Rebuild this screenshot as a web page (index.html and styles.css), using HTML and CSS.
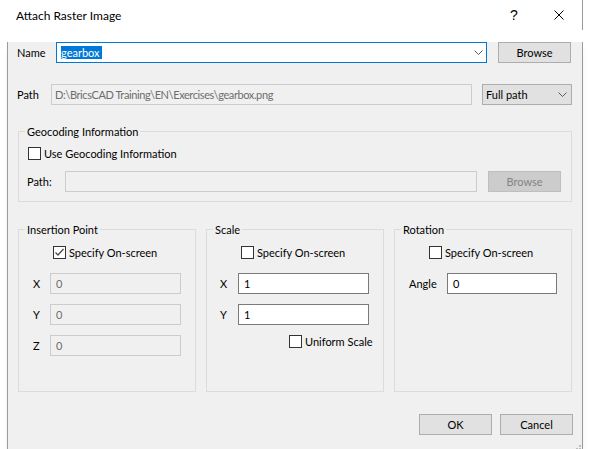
FILE: index.html
```html
<!DOCTYPE html>
<html>
<head>
<meta charset="utf-8">
<link rel="stylesheet" href="styles.css">
</head>
<body>
<div class="window">
  <div class="titlebar">
    <span class="title">Attach Raster Image</span>
    <span class="tb-btn help">?</span>
    <span class="tb-btn close"><svg width="10" height="10" viewBox="0 0 10 10"><path d="M0.5 0.5 L9.5 9.5 M9.5 0.5 L0.5 9.5" stroke="#000" stroke-width="1" fill="none"/></svg></span>
  </div>
  <div class="client">
    <div class="row row-name">
      <span class="lbl lbl-name">Name</span>
      <div class="combo combo-name"><span class="sel">gearbox</span><svg class="chev" width="9" height="5" viewBox="0 0 9 5"><path d="M0.5 0.5 L4.5 4.5 L8.5 0.5" stroke="#5a5a5a" stroke-width="1" fill="none"/></svg></div>
      <button class="btn btn-name">Browse</button>
    </div>
    <div class="row row-path">
      <span class="lbl lbl-path">Path</span>
      <div class="edit disabled edit-path">D:\BricsCAD Training\EN\Exercises\gearbox.png</div>
      <div class="combo combo-type"><span>Full path</span><svg class="chev" width="9" height="5" viewBox="0 0 9 5"><path d="M0.5 0.5 L4.5 4.5 L8.5 0.5" stroke="#5a5a5a" stroke-width="1" fill="none"/></svg></div>
    </div>
    <div class="group geo">
      <span class="legend">Geocoding Information</span>
      <div class="check-row geo-check"><span class="cb"></span><span>Use Geocoding Information</span></div>
      <div class="row geo-path">
        <span class="lbl lbl-geo">Path:</span>
        <div class="edit disabled edit-geo"></div>
        <button class="btn btn-disabled btn-geo">Browse</button>
      </div>
    </div>
    <div class="groups3">
      <div class="group g3">
        <span class="legend">Insertion Point</span>
        <div class="check-row g3-check"><span class="cb checked"><svg width="11" height="11" viewBox="0 0 11 11"><path d="M1.5 5.5 L4 8 L9.5 2" stroke="#4a4a4a" stroke-width="1.3" fill="none"/></svg></span><span>Specify On-screen</span></div>
        <div class="row field-row first"><span class="lbl lbl-axis">X</span><div class="edit disabled edit-ins">0</div></div>
        <div class="row field-row"><span class="lbl lbl-axis">Y</span><div class="edit disabled edit-ins">0</div></div>
        <div class="row field-row"><span class="lbl lbl-axis">Z</span><div class="edit disabled edit-ins">0</div></div>
      </div>
      <div class="group g3">
        <span class="legend">Scale</span>
        <div class="check-row g3-check"><span class="cb"></span><span>Specify On-screen</span></div>
        <div class="row field-row first"><span class="lbl lbl-axis scale-axis">X</span><div class="edit edit-ins">1</div></div>
        <div class="row field-row"><span class="lbl lbl-axis scale-axis">Y</span><div class="edit edit-ins">1</div></div>
        <div class="check-row uniform"><span class="cb"></span><span>Uniform Scale</span></div>
      </div>
      <div class="group g3">
        <span class="legend">Rotation</span>
        <div class="check-row g3-check"><span class="cb"></span><span>Specify On-screen</span></div>
        <div class="row field-row first"><span class="lbl lbl-angle">Angle</span><div class="edit edit-angle">0</div></div>
      </div>
    </div>
    <div class="footer">
      <button class="btn">OK</button>
      <button class="btn">Cancel</button>
    </div>
    <svg class="grip" width="9" height="9" viewBox="0 0 9 9">
      <rect x="7" y="1" width="2" height="2" fill="#bdbdbd"/>
      <rect x="4" y="4" width="2" height="2" fill="#bdbdbd"/>
      <rect x="7" y="4" width="2" height="2" fill="#bdbdbd"/>
      <rect x="1" y="7" width="2" height="2" fill="#bdbdbd"/>
      <rect x="4" y="7" width="2" height="2" fill="#bdbdbd"/>
      <rect x="7" y="7" width="2" height="2" fill="#bdbdbd"/>
    </svg>
  </div>
</div>
</body>
</html>
```

FILE: styles.css
```css
html, body {
  margin: 0;
  padding: 0;
  background: #ffffff;
}
body {
  font-family: "Lato", "Liberation Sans", sans-serif;
  font-size: 11px;
  color: #000;
  white-space: nowrap;
}
.window {
  width: 576px;
  margin-left: 7px;
}
.titlebar {
  height: 30px;
  box-sizing: border-box;
  width: 576px;
  border-right: 1px solid #9b9b9b;
  background: #fff;
  display: flex;
  align-items: center;
}
.title {
  flex: 1;
  padding-left: 9px;
  font-size: 12px;
}
.tb-btn {
  width: 46px;
  height: 30px;
  display: flex;
  align-items: center;
  justify-content: center;
}
.help {
  font-size: 14px;
  font-family: "Liberation Sans", sans-serif;
  padding-left: 2px;
  box-sizing: border-box;
}
.close svg {
  display: block;
}
.client {
  position: relative;
  width: 574px;
  height: 411px;
  background: #f0f0f0;
  border: 1px solid #9b9b9b;
  border-top: 0;
  box-shadow: 0 5px 7px -3px rgba(0,0,0,0.16);
}
.row {
  display: flex;
  align-items: center;
  height: 21px;
}
.lbl {
  flex: none;
}
.row-name {
  margin: 12px 0 0 9px;
}
.lbl-name { width: 39px; }
.combo {
  height: 21px;
  box-sizing: border-box;
  display: flex;
  align-items: center;
  flex: none;
}
.combo-name {
  width: 431px;
  border: 1px solid #0078d7;
  background: #fff;
  padding-left: 4px;
}
.sel {
  background: #0078d7;
  color: #fff;
  line-height: 13px;
  padding: 0 2px 0 0;
}
.chev {
  margin-left: auto;
  display: block;
}
.combo-name .chev { margin-right: 3px; }
.btn {
  width: 73px;
  height: 21px;
  box-sizing: border-box;
  border: 1px solid #adadad;
  background: #e1e1e1;
  font: inherit;
  color: #000;
  padding: 0;
  margin: 0;
  flex: none;
}
.btn-name { margin-left: 11px; }
.row-path {
  margin: 21px 0 0 9px;
}
.lbl-path { width: 34px; }
.edit {
  height: 21px;
  box-sizing: border-box;
  border: 1px solid #7a7a7a;
  background: #fff;
  padding-left: 5px;
  display: flex;
  align-items: center;
  flex: none;
  overflow: hidden;
}
.edit.disabled {
  border-color: #cccccc;
  background: #f0f0f0;
  color: #6d6d6d;
}
.edit-path {
  width: 421px;
  padding-left: 3px;
  letter-spacing: -0.4px;
}
.combo-type {
  width: 90px;
  margin-left: 10px;
  border: 1px solid #adadad;
  background: #e1e1e1;
  padding-left: 3px;
}
.combo-type .chev { margin-right: 4px; }
.group {
  position: relative;
  box-sizing: border-box;
  border: 1px solid #dcdcdc;
}
.legend {
  position: absolute;
  top: -8px;
  left: 6px;
  padding: 0 2px;
  line-height: 15px;
  background: #f0f0f0;
}
.geo {
  margin: 26px 0 0 10px;
  width: 554px;
  height: 71px;
  padding: 15px 0 0 8px;
}
.check-row {
  display: flex;
  align-items: center;
  height: 13px;
}
.cb {
  width: 13px;
  height: 13px;
  box-sizing: border-box;
  border: 1px solid #333;
  background: #fff;
  margin-right: 3px;
  flex: none;
}
.cb svg { display: block; }
.geo-check { margin-left: 1px; }
.geo-path { margin-top: 11px; }
.lbl-geo { width: 38px; }
.edit-geo { width: 412px; }
.btn-geo { margin-left: 11px; }
.btn-disabled {
  background: #cccccc;
  border-color: #bfbfbf;
  color: #838383;
}
.groups3 {
  display: grid;
  grid-template-columns: repeat(3, 178px);
  column-gap: 10px;
  margin: 27px 0 0 10px;
}
.g3 {
  height: 163px;
  padding-top: 16px;
}
.g3-check { margin-left: 34px; }
.field-row { margin-top: 10px; }
.field-row.first { margin-top: 14px; }
.lbl-axis { width: 17px; margin-left: 14px; }
.scale-axis { width: 18px; margin-left: 13px; }
.edit-ins { width: 131px; }
.uniform { margin: 10px 0 0 82px; }
.lbl-angle { width: 38px; margin-left: 14px; }
.edit-angle { width: 110px; }
.footer {
  display: flex;
  justify-content: flex-end;
  column-gap: 8px;
  margin-top: 22px;
  padding-right: 9px;
}
.grip {
  position: absolute;
  right: 1px;
  bottom: 0;
  display: block;
}
```
